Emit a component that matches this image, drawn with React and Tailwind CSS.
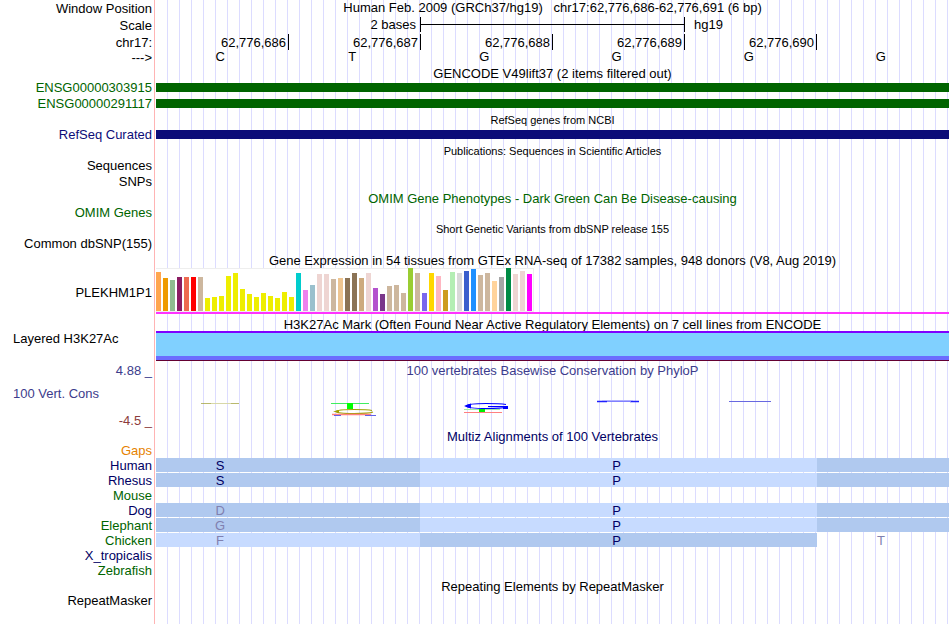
import React from 'react';

const BASES = ['C', 'T', 'G', 'G', 'G', 'G'];
const POSITIONS = ['62,776,686', '62,776,687', '62,776,688', '62,776,689', '62,776,690', ''];

// median expression per GTEx tissue: [height, color]
const EXPRESSION = [
  [39, '#ffa54f'], [33, '#ee9a00'], [31, '#8fbc8f'], [34, '#8b1c62'], [34, '#ee6a50'], [34, '#ff0000'],
  [34, '#cdb79e'], [13, '#eeee00'], [14, '#eeee00'], [15, '#eeee00'], [35, '#eeee00'], [38, '#eeee00'],
  [22, '#eeee00'], [17, '#eeee00'], [14, '#eeee00'], [18, '#eeee00'], [15, '#eeee00'], [13, '#eeee00'],
  [19, '#eeee00'], [14, '#eeee00'], [38, '#00cdcd'], [21, '#ee82ee'], [26, '#9ac0cd'], [37, '#eed5d2'],
  [37, '#eed5d2'], [32, '#cdb79e'], [33, '#eec591'], [33, '#8b7355'], [38, '#8b7355'], [33, '#cdaa7d'],
  [38, '#eed5d2'], [23, '#b452cd'], [17, '#7a378b'], [25, '#cdb79e'], [26, '#cdb79e'], [18, '#cdb79e'],
  [43, '#9acd32'], [38, '#cdb79e'], [18, '#7a67ee'], [38, '#ffd700'], [35, '#ffb6c1'], [21, '#cd9b1d'],
  [39, '#b4eeb4'], [38, '#d9d9d9'], [40, '#3a5fcd'], [42, '#1e90ff'], [36, '#cdb79e'], [38, '#cdb79e'],
  [30, '#ffd39b'], [34, '#a6a6a6'], [43, '#008b45'], [37, '#eed5d2'], [40, '#eed5d2'], [37, '#ff00ff'],
];

const NAVY = 'text-[#000064]';
const GREEN = 'text-[#006400]';
const DARK = 'bg-[#b0c9ef]';
const LIGHT = 'bg-[#c7dbff]';
const CODONS = [DARK, DARK, LIGHT, LIGHT, LIGHT, DARK];

const SPECIES = [
  { name: 'Human', color: NAVY, cells: CODONS, letters: ['S', '', '', 'P', '', ''] },
  { name: 'Rhesus', color: NAVY, cells: CODONS, letters: ['S', '', '', 'P', '', ''] },
  { name: 'Mouse', color: GREEN },
  { name: 'Dog', color: NAVY, cells: CODONS, letters: ['D', '', '', 'P', '', ''] },
  { name: 'Elephant', color: GREEN, cells: CODONS, letters: ['G', '', '', 'P', '', ''] },
  { name: 'Chicken', color: GREEN, cells: [LIGHT, LIGHT, DARK, DARK, DARK, ''], letters: ['F', '', '', 'P', '', 'T'] },
  { name: 'X_tropicalis', color: NAVY },
  { name: 'Zebrafish', color: GREEN },
];

function Row({ label, color = 'text-black', height = 'h-4', labelClass = 'text-right', children }) {
  return (
    <div className={`flex ${height}`}>
      <div className={`flex w-[155px] shrink-0 flex-col justify-center border-r border-[#ffb4b4] bg-white pr-0.5 pl-[13px] ${labelClass} ${color}`}>
        {label}
      </div>
      <div className="min-w-0 flex-1 border-l border-white">{children}</div>
    </div>
  );
}

function Title({ color = 'text-black', height = 'h-4', pad = '', small, label, labelColor, children }) {
  return (
    <Row height={height} label={label} color={labelColor}>
      <h2 className={`flex h-full items-center justify-center whitespace-pre ${small ? 'pt-0.5 text-[11px]' : pad} ${color}`}>
        {children}
      </h2>
    </Row>
  );
}

function Track({ label, color, bar }) {
  return (
    <Row label={label} color={color} labelClass="pb-0.5 text-right">
      {bar && (
        <div className="h-full pt-[3px]">
          <div className={`h-[9px] ${bar}`} />
        </div>
      )}
    </Row>
  );
}

// flattened base logos, one per position
function Logo({ children }) {
  return (
    <div className="flex justify-center pr-1">
      <svg width="48" height="20" viewBox="0 0 48 20">{children}</svg>
    </div>
  );
}

function ConservationLogos() {
  return (
    <div className="grid grid-cols-6">
      <Logo>
        <path d="M5 5.5H15M35 5.5H43" stroke="#a8a848" strokeOpacity="0.8" />
        <path d="M15 5.5H35" stroke="#d8d8a8" />
      </Logo>
      <Logo>
        <path d="M3 5.5H41" stroke="#40ee60" />
        <rect x="19" y="5" width="6" height="6" fill="#00ff00" />
        <path d="M44 12.5Q40 11.5 26 11.5Q9 11.5 8 13.5Q9 15.5 26 15.5Q41 15.5 45 14" fill="none" stroke="#a0a000" strokeWidth="1.2" />
        <path d="M5 13.5L11 12V15Z" fill="#a0a000" />
        <path d="M4 16.5H43" stroke="#ff8080" strokeWidth="1.5" />
        <path d="M6 17.5H13M37 17.5H48" stroke="#6060e8" />
      </Logo>
      <Logo>
        <path d="M46 6.5Q40 5.5 26 5.5Q8 5.5 6 8Q8 10.5 26 10.5Q42 10.5 46 9" fill="none" stroke="#0000ff" strokeWidth="1.2" />
        <path d="M4 8L11 5.5V10.5Z" fill="#0000ff" />
        <path d="M28 8.5H44" stroke="#0000ff" />
        <rect x="43" y="8" width="5" height="3" fill="#0000ff" />
        <path d="M4 11.5H40" stroke="#a0f0a0" />
        <rect x="19" y="11" width="6" height="3" fill="#00ee00" />
        <path d="M4 14.5H42" stroke="#ff8080" />
      </Logo>
      <Logo>
        <path d="M4 3.5H14M37 3.5H46" stroke="#2020ff" strokeWidth="1.5" />
        <path d="M9 2.5H40" stroke="#b0b0ff" />
        <path d="M14 3.5H38" stroke="#8080ff" />
      </Logo>
      <Logo>
        <path d="M4 3.5H46" stroke="#6868e0" />
      </Logo>
    </div>
  );
}

function App() {
  return (
    <main className="flex min-h-screen flex-col bg-white bg-[repeating-linear-gradient(to_right,transparent_0_11px,#dcdcff_11px_12px)] pr-px font-['Liberation_Sans',Arial,sans-serif] text-[13px] leading-[15px] whitespace-nowrap text-black">
      <Title label="Window Position" pad="pb-0.5">
        {'Human Feb. 2009 (GRCh37/hg19)   chr17:62,776,686-62,776,691 (6 bp)'}
      </Title>

      <Row label="Scale" height="h-[18px]">
        <div className="grid h-full grid-cols-6 items-center pr-px pb-px">
          <div className="col-span-2 pr-1 text-right">2 bases</div>
          <div className="col-span-2 flex h-[15px] items-center border-l border-black">
            <div className="h-px w-full bg-black" />
          </div>
          <div className="col-span-2 h-[15px] border-l border-black pl-[9px]">hg19</div>
        </div>
      </Row>
      <Row label="chr17:" height="h-[15px]" labelClass="pt-0.5 text-right">
        <div className="grid h-full grid-cols-6 pr-px">
          {POSITIONS.map((pos, i) => (
            <div key={i} className={`pt-px pr-0.5 text-right ${i > 0 ? 'border-l border-black' : ''}`}>{pos}</div>
          ))}
        </div>
      </Row>
      <Row label="--->" height="h-[17px]">
        <div className="grid h-full grid-cols-6">
          {BASES.map((base, i) => (
            <div key={i} className="pr-1 text-center">{base}</div>
          ))}
        </div>
      </Row>

      <Title height="h-[14px]">GENCODE V49lift37 (2 items filtered out)</Title>
      <Track label="ENSG00000303915" color={GREEN} bar="bg-[#006400]" />
      <Track label="ENSG00000291117" color={GREEN} bar="bg-[#006400]" />
      <Title height="h-[15px]" small>RefSeq genes from NCBI</Title>
      <Track label="RefSeq Curated" color="text-[#0c0c78]" bar="bg-[#0c0c78]" />
      <Title height="h-[15px]" small>Publications: Sequences in Scientific Articles</Title>
      <Track label="Sequences" />
      <Track label="SNPs" />
      <Title height="h-[15px]" color={GREEN} pad="pt-0.5">OMIM Gene Phenotypes - Dark Green Can Be Disease-causing</Title>
      <Track label="OMIM Genes" color={GREEN} />
      <Title height="h-[15px]" small>Short Genetic Variants from dbSNP release 155</Title>
      <Track label="Common dbSNP(155)" />

      <Title>Gene Expression in 54 tissues from GTEx RNA-seq of 17382 samples, 948 donors (V8, Aug 2019)</Title>
      <Row label="PLEKHM1P1" height="h-[46px]" labelClass="text-right pt-[3px]">
        <div className="flex h-full flex-col justify-between">
          <div className="flex h-11 w-fit items-end gap-0.5 border-t border-r border-b border-[#eeeeee] bg-white pr-px">
            {EXPRESSION.map(([h, color], i) => (
              <div key={i} className="w-[5px]" style={{ height: h, backgroundColor: color }} />
            ))}
          </div>
          <div className="h-0.5 bg-[#ff33ff]" />
        </div>
      </Row>

      <Title height="h-[17px]" pad="pt-1">H3K27Ac Mark (Often Found Near Active Regulatory Elements) on 7 cell lines from ENCODE</Title>
      <Row label="Layered H3K27Ac" height="h-[30px]" labelClass="text-left pb-4">
        <div className="h-full border-t-2 border-b border-t-[#7f00ff] border-b-[#640032] bg-[#80d0ff] pt-[23px]">
          <div className="h-1 bg-[#6c6cff]" />
        </div>
      </Row>

      <Title height="h-[19px]" label="4.88 _" labelColor="text-[#3c3c8c]" color="text-[#3c3c8c]">
        100 vertebrates Basewise Conservation by PhyloP
      </Title>
      <Row
        height="h-12"
        label={
          <>
            <span className="text-left text-[#3c3c8c]">100 Vert. Cons</span>
            <span className="pt-3 text-[#8c3c3c]">-4.5 _</span>
          </>
        }
        labelClass="pt-1.5 text-right"
      >
        <div className="pt-[18px]">
          <ConservationLogos />
        </div>
      </Row>

      <Title height="h-[15px]" color={NAVY} pad="pt-0.5">Multiz Alignments of 100 Vertebrates</Title>
      <Row label="Gaps" color="text-[#e68200]" height="h-[15px]" />
      {SPECIES.map(({ name, color, cells, letters }) => (
        <Row key={name} label={name} color={color} height="h-[15px]">
          {cells && (
            <div className="grid grid-cols-6 grid-rows-[14px]">
              {cells.map((bg, i) => (
                <div
                  key={i}
                  className={`pr-1 text-center ${bg} ${'SP'.includes(letters[i]) ? NAVY : 'text-[#8080b0]'}`}
                >
                  {letters[i]}
                </div>
              ))}
            </div>
          )}
        </Row>
      ))}
      <Title height="h-[15px]" pad="pt-0.5">Repeating Elements by RepeatMasker</Title>
      <Row label="RepeatMasker" height="grow" labelClass="justify-start text-right" />
    </main>
  );
}

export default App;
